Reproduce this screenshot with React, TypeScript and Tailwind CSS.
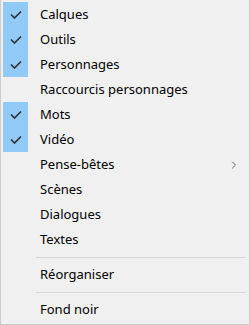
import { ChevronRight } from "lucide-react";

type Entry =
    | { kind: "item"; label: string; checked?: boolean; submenu?: boolean }
    | { kind: "sep" };

const entries: Entry[] = [
    { kind: "item", label: "Calques", checked: true },
    { kind: "item", label: "Outils", checked: true },
    { kind: "item", label: "Personnages", checked: true },
    { kind: "item", label: "Raccourcis personnages" },
    { kind: "item", label: "Mots", checked: true },
    { kind: "item", label: "Vidéo", checked: true },
    { kind: "item", label: "Pense-bêtes", submenu: true },
    { kind: "item", label: "Scènes" },
    { kind: "item", label: "Dialogues" },
    { kind: "item", label: "Textes" },
    { kind: "sep" },
    { kind: "item", label: "Réorganiser" },
    { kind: "sep" },
    { kind: "item", label: "Fond noir" },
];

function Check() {
    return (
        <svg width="12" height="9" viewBox="0 0 12 9" fill="none">
            <path d="M1 4.5 L4.5 8 L11 1.5" stroke="#333" strokeWidth="1.7" />
        </svg>
    );
}

export default function App() {
    return (
        <div
            className="w-[250px] h-[325px] bg-[#f0f0f0] border-l border-r border-b border-[#cccccc] pt-[2px] text-black text-[13px]"
            style={{ fontFamily: '"Noto Sans", "Open Sans", sans-serif' }}
        >
            {entries.map((e, i) => {
                if (e.kind === "sep") {
                    return (
                        <div key={i} className="h-[10px] flex items-center pl-[35px] pr-[3px]">
                            <div className="w-full h-px bg-[#d7d7d7]" />
                        </div>
                    );
                }
                // checked rows next to each other share one blue box
                return (
                    <div key={i} className="h-[25px] flex items-center">
                        <div
                            className={`ml-[2px] w-[25px] h-full flex items-center justify-center ${
                                e.checked ? "bg-[#91c9f7]" : ""
                            }`}
                        >
                            {e.checked && <Check />}
                        </div>
                        <span className="ml-[12px] flex-1 leading-none">{e.label}</span>
                        {e.submenu && (
                            <ChevronRight size={12} strokeWidth={1.5} className="mr-[9px] text-[#333]" />
                        )}
                    </div>
                );
            })}
        </div>
    );
}
